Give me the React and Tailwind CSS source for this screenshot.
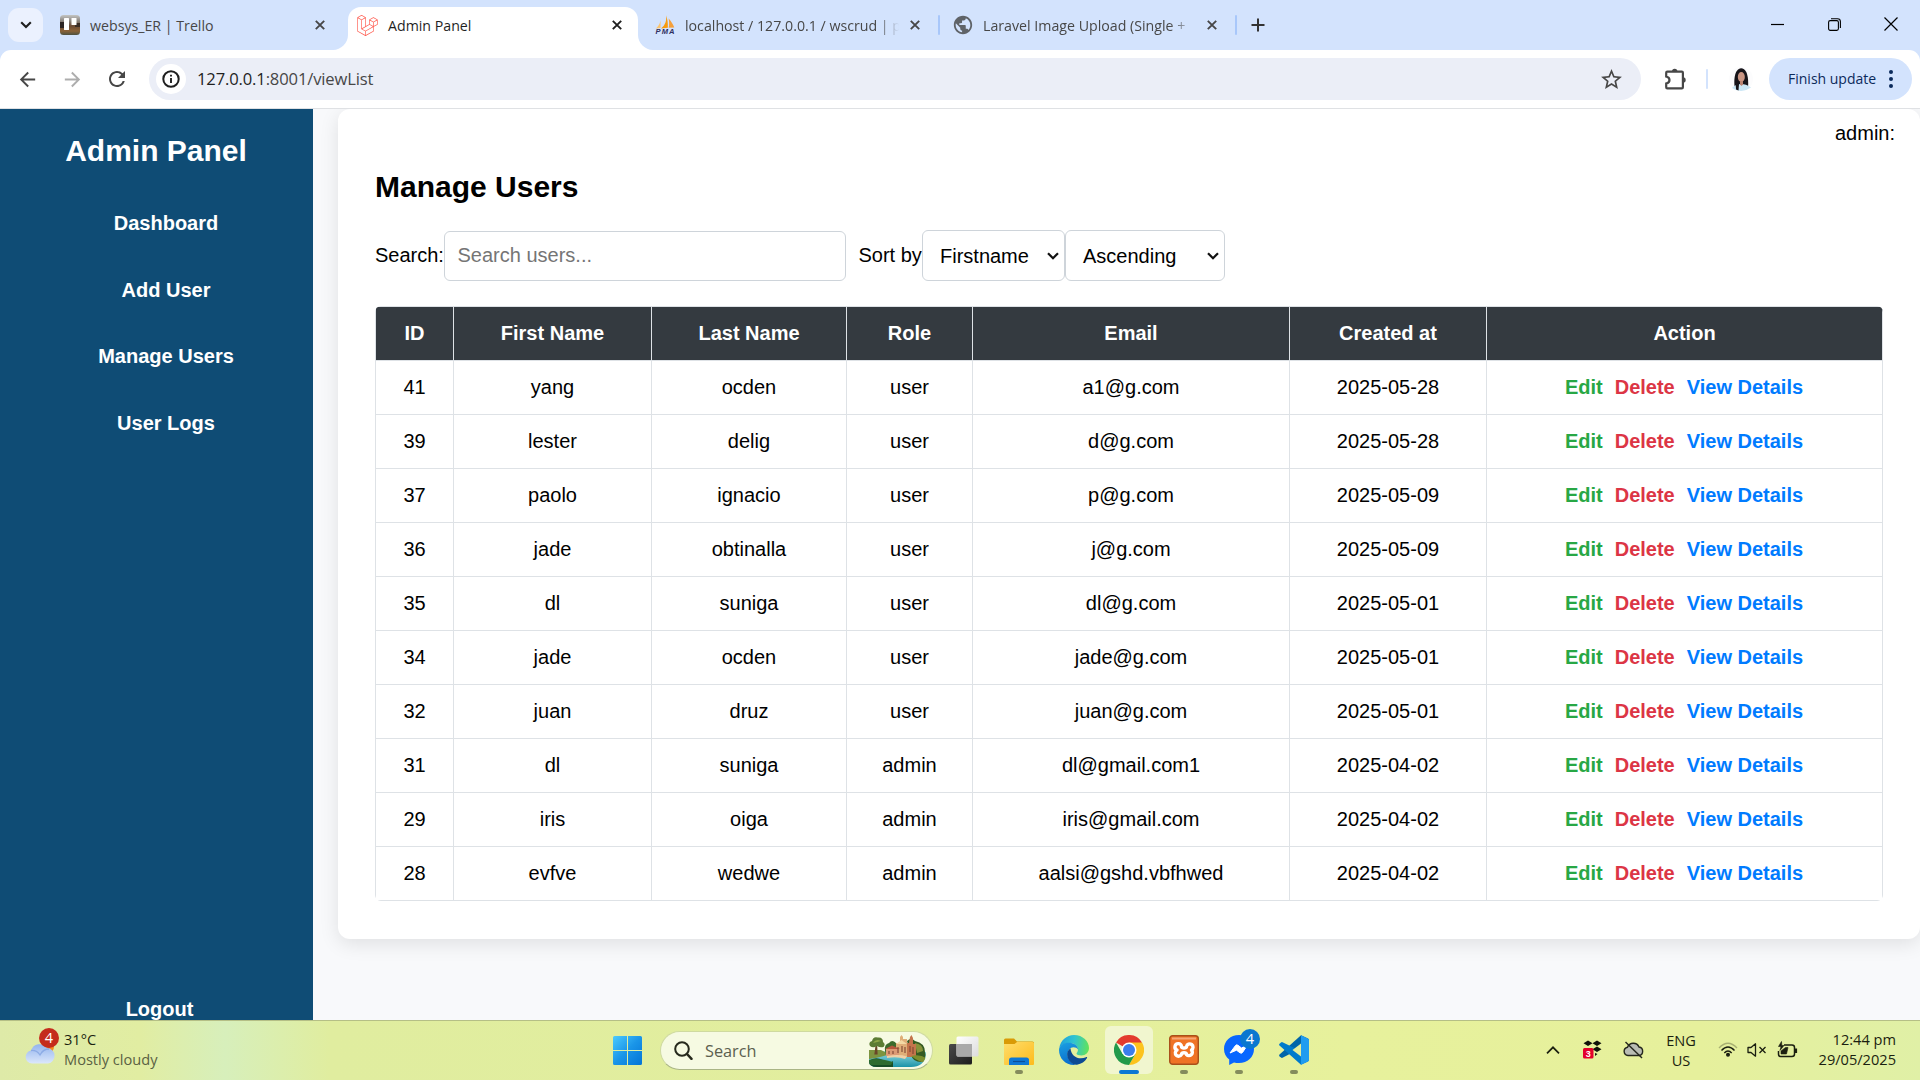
import React from "react";
import {
  MdArrowBack,
  MdArrowForward,
  MdRefresh,
  MdStarBorder,
  MdPublic,
} from "react-icons/md";
import { SiLaravel } from "react-icons/si";

const users = [
  [41, "yang", "ocden", "user", "a1@g.com", "2025-05-28"],
  [39, "lester", "delig", "user", "d@g.com", "2025-05-28"],
  [37, "paolo", "ignacio", "user", "p@g.com", "2025-05-09"],
  [36, "jade", "obtinalla", "user", "j@g.com", "2025-05-09"],
  [35, "dl", "suniga", "user", "dl@g.com", "2025-05-01"],
  [34, "jade", "ocden", "user", "jade@g.com", "2025-05-01"],
  [32, "juan", "druz", "user", "juan@g.com", "2025-05-01"],
  [31, "dl", "suniga", "admin", "dl@gmail.com1", "2025-04-02"],
  [29, "iris", "oiga", "admin", "iris@gmail.com", "2025-04-02"],
  [28, "evfve", "wedwe", "admin", "aalsi@gshd.vbfhwed", "2025-04-02"],
];

const columns = ["ID", "First Name", "Last Name", "Role", "Email", "Created at", "Action"];

function CloseX({ className = "text-[#474747]" }) {
  return (
    <svg className={"shrink-0 " + className} width="10" height="10" viewBox="0 0 10 10" fill="none" stroke="currentColor" strokeWidth="1.9">
      <path d="M0.8 0.8 9.2 9.2M9.2 0.8 0.8 9.2" />
    </svg>
  );
}

function BoardIcon() {
  return (
    <svg width="20" height="20" viewBox="0 0 20 20">
      <defs>
        <linearGradient id="board" x1="0" y1="0" x2="0" y2="1">
          <stop offset="0" stopColor="#c4c5c3" />
          <stop offset="0.3" stopColor="#8b8580" />
          <stop offset="0.55" stopColor="#6b4a33" />
          <stop offset="0.8" stopColor="#8a6238" />
          <stop offset="1" stopColor="#4c5040" />
        </linearGradient>
      </defs>
      <rect width="20" height="20" rx="3.5" fill="url(#board)" />
      <rect x="0" y="7" width="5" height="6" fill="#2b2422" />
      <rect x="15" y="8" width="5" height="4" fill="#3a2d26" />
      <rect x="4" y="3" width="5" height="12" rx="0.6" fill="#fff" />
      <rect x="11.5" y="3" width="5" height="7" rx="0.6" fill="#fff" />
    </svg>
  );
}

function PmaIcon() {
  return (
    <svg width="20" height="20" viewBox="0 0 20 20" className="overflow-visible">
      <path d="M5.500 2.5C6 7 4 11 0.8 13.5L5.500 13Z" fill="#fbc46f" />
      <path d="M11 0.2C11.8 5 10.5 10 6 13.4L12.8 12.8C13.100 8 12.5 4 11 0.2Z" fill="#f89c0e" />
      <path d="M13.600 3.5C14.300 7 14.300 10 13.700 12.800L19.300 12.6C18 9 16 6 13.600 3.5Z" fill="#f5a03c" />
      <text x="10" y="19.200" textAnchor="middle" fontSize="7.600" fontWeight="700" fontStyle="italic" fontFamily="Liberation Sans, sans-serif" fill="#2f2f5f" textLength="19">PMA</text>
    </svg>
  );
}

function Divider() {
  return <div className="h-5 w-[2px] rounded bg-[#a8c7fa]" />;
}

function Tab({ icon, title, className, fade }) {
  return (
    <div className={"flex h-[43px] shrink-0 items-center pb-[7px] " + className}>
      <div className="flex w-5 shrink-0 justify-center">{icon}</div>
      <div className={"ml-[10px] min-w-0 flex-1 pt-px whitespace-nowrap " + (fade || "")}>{title}</div>
      <CloseX />
    </div>
  );
}

function TabStrip() {
  return (
    <div className="flex h-[50px] shrink-0 bg-[#d3e3fd] pt-[7px] pl-2 text-[14.200px] text-[#474747]">
      <button className="mt-px flex h-[34px] w-[35px] items-center justify-center rounded-[11px] bg-[#ebf1fe]">
        <svg width="12" height="8" viewBox="0 0 12 8" fill="none" stroke="#1f1f1f" strokeWidth="2.1">
          <path d="M1.2 1.2 6 6 10.8 1.2" />
        </svg>
      </button>
      <Tab className="w-[282px] pl-[17px]" icon={<BoardIcon />} title="websys_ER | Trello" />
      <svg className="ml-2 self-end" width="15" height="15" viewBox="0 0 15 15">
        <path d="M15 0V15H0C8 15 15 8 15 0Z" fill="#fff" />
      </svg>
      <div className="flex h-[43px] w-[290px] shrink-0 items-center rounded-t-[13px] bg-white pb-[7px] pl-[9px] text-[#1f1f1f]">
        <SiLaravel size={21} color="#ff5a4e" />
        <div className="ml-[10px] flex-1 pt-px">Admin Panel</div>
        <CloseX className="mr-[16px] text-[#1f1f1f]" />
      </div>
      <svg className="self-end" width="15" height="15" viewBox="0 0 15 15">
        <path d="M0 0V15H15C7 15 0 8 0 0Z" fill="#fff" />
      </svg>
      <Tab
        className="w-[267px] pl-[2px]"
        icon={<PmaIcon />}
        title="localhost / 127.0.0.1 / wscrud | p"
        fade="mr-[9px] [mask-image:linear-gradient(to_right,black_192px,transparent_214px)]"
      />
      <div className="ml-[18px] flex h-9 items-center"><Divider /></div>
      <Tab
        className="ml-[13px] w-[264px]"
        icon={<MdPublic size={22} color="#5f6368" className="shrink-0" />}
        title="Laravel Image Upload (Single +"
        fade="mr-[12px] [mask-image:linear-gradient(to_right,black_186px,transparent_214px)]"
      />
      <div className="ml-[18px] flex h-9 items-center"><Divider /></div>
      <div className="ml-[14px] flex h-9 items-center">
        <svg width="14" height="14" viewBox="0 0 14 14" stroke="#333" strokeWidth="2"><path d="M7 0.5V13.5M0.5 7H13.5" /></svg>
      </div>
      <div className="mr-[22px] ml-auto flex h-[34px] items-center gap-[43px] text-black">
        <svg width="14" height="13" viewBox="0 0 14 13" stroke="currentColor"><path d="M0 6.5H13" strokeWidth="1.2" /></svg>
        <svg width="13" height="13" viewBox="0 0 13 13" fill="none" stroke="currentColor" strokeWidth="1.1">
          <rect x="0.6" y="2.6" width="9.8" height="9.8" rx="1.6" />
          <path d="M3 0.7H9.5Q12.4 0.7 12.4 3.6V10" />
        </svg>
        <svg width="14" height="14" viewBox="0 0 14 14" fill="none" stroke="currentColor" strokeWidth="1.2">
          <path d="M0.5 0.5 13.5 13.5M13.5 0.5 0.5 13.5" />
        </svg>
      </div>
    </div>
  );
}

function Avatar() {
  return (
    <svg width="24" height="24" viewBox="0 0 24 24">
      <circle cx="12" cy="12" r="12" fill="#fcfcfd" />
      <path d="M6 22C4.500 15 5 1.500 12.2 1.2C19.500 1.500 19.500 15 19 21Z" fill="#17151a" />
      <path d="M3 21C6 17.500 9 17 12 17S19 18 22 20.500Q17 24 12 24T3 21Z" fill="#c9e6f5" />
      <path d="M7 22.500 6.500 14 10 17 9.500 23.500Z" fill="#17151a" />
      <ellipse cx="12.300" cy="10" rx="3.500" ry="5" fill="#c99684" />
      <path d="M11 14H14V17.500L12.500 19 11 17.500Z" fill="#b98472" />
    </svg>
  );
}

function Toolbar() {
  return (
    <div className="h-[59px] shrink-0 bg-[#d3e3fd]">
      <div className="flex h-[59px] items-center rounded-t-[11px] border-b border-[#dfe1e4] bg-white pl-[16px]">
        <MdArrowBack size={23} color="#474747" />
        <MdArrowForward size={23} color="#adadad" className="ml-[22px]" />
        <MdRefresh size={24} color="#474747" className="ml-[21px]" />
        <div className="ml-[20px] flex h-[42px] w-[1492px] items-center rounded-full bg-[#ebeef7] pl-[7px]">
          <div className="flex size-[30px] items-center justify-center rounded-full bg-white">
            <svg width="18" height="18" viewBox="0 0 18 18" fill="none" stroke="#1f1f1f">
              <circle cx="9" cy="9" r="7.700" strokeWidth="2" />
              <path d="M9 8V13M9 4.800V6.500" strokeWidth="1.900" />
            </svg>
          </div>
          <div className="ml-[11px] flex-1 pt-px text-[16.600px] tracking-[-0.150px] text-[#474747]">
            <span className="text-[#1f1f1f]">127.0.0.1</span>:8001/viewList
          </div>
          <MdStarBorder size={25} color="#474747" className="mr-[17px]" />
        </div>
        <svg className="mb-[2px] ml-[23px]" width="23" height="25" viewBox="0 0 23 25" fill="none">
          <path d="M3.300 5.700H17.800Q18.900 5.700 18.900 6.800V21.200Q18.900 22.300 17.800 22.300H3.300Q2.200 22.300 2.200 21.200V17.500C6.600 16.500 6.600 11.500 2.200 10.500V6.800Q2.200 5.700 3.300 5.700Z" stroke="#474747" strokeWidth="2.200" />
          <path d="M8 5.500A2.700 2.700 0 0 1 13.400 5.500ZM19 11.200A2.700 2.700 0 0 1 19 16.600Z" fill="#474747" />
        </svg>
        <div className="ml-[19px] h-5 w-[2px] rounded bg-[#d3e3fd]" />
        <div className="ml-[21px]"><Avatar /></div>
        <div className="ml-[16px] flex h-[42px] w-[143px] items-center rounded-full bg-[#d3e3fd] pl-[19px] text-[14px] text-[#0b2a5b]">
          <span className="w-[96px] pb-px whitespace-nowrap">Finish update</span>
          <svg className="ml-[4px]" width="6" height="20" viewBox="0 0 6 20" fill="#0b2a5b">
            <circle cx="3" cy="3" r="2" /><circle cx="3" cy="10" r="2" /><circle cx="3" cy="17" r="2" />
          </svg>
        </div>
      </div>
    </div>
  );
}

function Sidebar() {
  return (
    <aside className="flex w-[313px] shrink-0 flex-col items-center bg-[#0f4c75] pt-[25px] font-bold text-white">
      <h2 className="mr-[1px] text-[30px] leading-[34px]">Admin Panel</h2>
      <nav className="mt-[44px] ml-[19px] flex flex-col items-center gap-[43.600px] text-[20px] leading-[23px]">
        <a>Dashboard</a>
        <a>Add User</a>
        <a>Manage Users</a>
        <a>User Logs</a>
      </nav>
      <a className="mt-auto -mb-px ml-[6px] text-[20px] leading-[23px]">Logout</a>
    </aside>
  );
}

function SelectBox({ label, className }) {
  return (
    <div className={"flex h-[51px] items-center justify-between rounded-[6px] border border-[#ced4da] pt-[2px] pl-[17px] " + className}>
      <span>{label}</span>
      <svg className="mr-[5px] mb-[2px]" width="12" height="8" viewBox="0 0 12 8" fill="none" stroke="#111" strokeWidth="2.200">
        <path d="M1 1.200 6 6.200 11 1.200" />
      </svg>
    </div>
  );
}

function UsersTable() {
  return (
    <div className="mt-[25px] w-[1508px] overflow-hidden rounded-[6px]">
      <table className="w-[1508px] table-fixed border-separate border-spacing-0 border-t border-l border-[#dee2e6] text-center">
        <colgroup>
          <col className="w-[78px]" />
          <col className="w-[198px]" />
          <col className="w-[195px]" />
          <col className="w-[126px]" />
          <col className="w-[317px]" />
          <col className="w-[197px]" />
          <col className="w-[396px]" />
        </colgroup>
        <thead>
          <tr className="bg-[#343a40] text-white">
            {columns.map((c) => (
              <th key={c} className="h-[54px] border-r border-b border-[#dee2e6] p-0 font-bold">{c}</th>
            ))}
          </tr>
        </thead>
        <tbody>
          {users.map((u) => (
            <tr key={u[0]}>
              {u.map((v, i) => (
                <td key={i} className="h-[54px] border-r border-b border-[#dee2e6] p-0">{v}</td>
              ))}
              <td className="h-[54px] border-r border-b border-[#dee2e6] p-0">
                <div className="flex justify-center gap-[12px] pr-px font-bold">
                  <a className="text-[#28a745]">Edit</a>
                  <a className="text-[#dc3545]">Delete</a>
                  <a className="text-[#007bff]">View Details</a>
                </div>
              </td>
            </tr>
          ))}
        </tbody>
      </table>
    </div>
  );
}

function Page() {
  return (
    <div className="flex h-[911px] shrink-0 overflow-hidden bg-[#f8f9fb] font-['Liberation_Sans',Arial,sans-serif] text-[20px] leading-[23px] text-black">
      <Sidebar />
      <main className="flex-1 pl-[25px]">
        <section className="h-[830px] rounded-[12px] bg-white pt-[13px] pl-[37px] shadow-[0_5px_19px_rgba(0,0,0,0.1)]">
          <div className="pr-[25px] text-right">admin:</div>
          <h2 className="mt-[25px] text-[30px] leading-[34px] font-bold">Manage Users</h2>
          <div className="mt-[26px] flex h-[51px] items-center">
            <label className="w-[69px]">Search:</label>
            <div className="mt-px flex h-[50px] w-[402px] items-center rounded-[6px] border border-[#ced4da] pb-[2px] pl-[12.500px] text-[#757575]">
              Search users...
            </div>
            <label className="ml-[12.500px] w-[63.500px] whitespace-nowrap">Sort by</label>
            <SelectBox label="Firstname" className="w-[143px]" />
            <SelectBox label="Ascending" className="w-[160px]" />
          </div>
          <UsersTable />
        </section>
      </main>
    </div>
  );
}

function Weather() {
  return (
    <svg width="34" height="36" viewBox="0 0 34 36" className="overflow-visible">
      <defs>
        <linearGradient id="cloud" x1="0" y1="0" x2="0" y2="1">
          <stop offset="0" stopColor="#93b4ee" />
          <stop offset="1" stopColor="#dbe7fb" />
        </linearGradient>
      </defs>
      <circle cx="23" cy="19" r="6" fill="#f58a1f" />
      <path d="M7 35.500A6.500 6.500 0 0 1 6 22.600A9 9 0 0 1 22 20A7.800 7.800 0 0 1 23 35.500Z" fill="url(#cloud)" />
      <path d="M6 22.500Q12 22 15 27Q18 21 24 21" fill="none" stroke="#7d9fe0" strokeWidth="1.300" opacity="0.7" />
      <circle cx="24" cy="10" r="10" fill="#c42b1c" />
      <text x="24" y="15" textAnchor="middle" fontSize="14.500" fontFamily="Open Sans, sans-serif" fill="#fff">4</text>
    </svg>
  );
}

function WindowsLogo() {
  return (
    <svg width="29" height="29" viewBox="0 0 29 29">
      <defs>
        <linearGradient id="win" x1="0" y1="0" x2="1" y2="1">
          <stop offset="0" stopColor="#4ccbfd" />
          <stop offset="0.500" stopColor="#1a95e8" />
          <stop offset="1" stopColor="#0374d6" />
        </linearGradient>
      </defs>
      <path d="M1.500 0H14V14H0V1.500Q0 0 1.500 0ZM15 0H27.500Q29 0 29 1.500V14H15ZM0 15H14V29H1.500Q0 29 0 27.500ZM15 15H29V27.500Q29 29 27.500 29H15Z" fill="url(#win)" />
    </svg>
  );
}

function Scenery() {
  return (
    <svg width="57" height="32" viewBox="0 0 57 32">
      <defs>
        <clipPath id="pill"><path d="M0 0H57V20Q55 32 42 32H8Q0 32 0 26Z" /></clipPath>
        <linearGradient id="water" x1="0" y1="0" x2="0" y2="1">
          <stop offset="0" stopColor="#9be0e6" />
          <stop offset="1" stopColor="#1c93a8" />
        </linearGradient>
      </defs>
      <g clipPath="url(#pill)">
        <path d="M0 18Q20 14 57 17V32H0Z" fill="url(#water)" />
        <path d="M0 15 12 15 20 19Q14 22 0 24Z" fill="#7d9440" />
        <path d="M0 26Q6 21 14 25T24 26V32H0Z" fill="#174c26" />
        <path d="M0 25Q8 22 24 27L22 30H0Z" fill="#2d6a2f" />
        <path d="M16 16Q15 9 20 8Q23 4 27 8V20H17Z" fill="#3c6b2c" />
        <path d="M38 6Q42 2 46 6Q56 8 56 17Q58 24 52 27Q44 27 42 20Z" fill="#355a22" />
        <path d="M46 8Q54 9 54 16L48 18Z" fill="#87923a" />
        <path d="M27 8H31V2L32.500 0 34 2V4H38V22H27Z" fill="#dfae78" />
        <path d="M17 14H30V21H17Z" fill="#dc9a74" />
        <path d="M16 14 23 10.500 31 14Z" fill="#b4573c" />
        <path d="M40 8 41 2 42.500 0 44 3V9H47V22H38V8Z" fill="#c4744c" />
        <path d="M27 9 32.500 5 38 9Z" fill="#f3d9a4" />
        <path d="M20 16V19M24 16V19M29 12V18M33 11V17M36 12V18M41 11V17M44 12V19" stroke="#7e4432" strokeWidth="1.100" />
        <path d="M18 21Q30 19 38 21.500L36 24Q28 21 18 23Z" fill="#efd0a6" />
        <path d="M42 21Q51 19 57 23V28Q50 27 42 21Z" fill="#7c8f2e" />
        <path d="M7.500 8 8 19H6Z" fill="#6a4528" stroke="#6a4528" strokeWidth="1.200" />
        <path d="M1 11Q-1 7 3 6Q4 1 9 2.500Q14 2 14 7Q17 9 14.500 12Q11 13 8 11Q4 13.500 1 11Z" fill="#5c7c34" />
        <path d="M4 8Q7 3 12 6Q9 7 4 8Z" fill="#8da647" />
      </g>
    </svg>
  );
}

function TaskView() {
  return (
    <svg width="30" height="29" viewBox="0 0 30 29">
      <defs>
        <linearGradient id="tv" x1="0" y1="0" x2="1" y2="1">
          <stop offset="0" stopColor="#4a4a4a" /><stop offset="1" stopColor="#1d1d1d" />
        </linearGradient>
        <linearGradient id="tw" x1="0" y1="0" x2="1" y2="1">
          <stop offset="0" stopColor="#fff" /><stop offset="1" stopColor="#dcdcdc" />
        </linearGradient>
      </defs>
      <rect x="0" y="8" width="23" height="20.500" rx="1.500" fill="url(#tv)" />
      <rect x="7.500" y="0.500" width="22" height="20" rx="1.500" fill="url(#tw)" />
      <path d="M7.500 8H23V20.500H9Q7.500 20.500 7.500 19Z" fill="#a9a9a9" />
    </svg>
  );
}

function Folder() {
  return (
    <svg width="30" height="27" viewBox="0 0 30 27">
      <defs>
        <linearGradient id="fold" x1="0" y1="0" x2="1" y2="1">
          <stop offset="0" stopColor="#ffdd6b" /><stop offset="1" stopColor="#fdbb1c" />
        </linearGradient>
      </defs>
      <path d="M0 2Q0 0.500 1.500 0.500H10L13 3.500H28.500Q30 3.500 30 5V12H0Z" fill="#d99a06" />
      <path d="M0 6H10.500L13 4H28.500Q30 4 30 5.500V26Q30 27 29 27H1Q0 27 0 26Z" fill="url(#fold)" />
      <path d="M5 27V22Q5 19.500 7.500 19.500H22.500Q25 19.500 25 22V27Z" fill="#0f78d4" />
      <path d="M9 23.500H21" stroke="#0a4f9a" strokeWidth="1.200" />
    </svg>
  );
}

function Edge() {
  return (
    <svg width="30" height="30" viewBox="0 0 30 30">
      <defs>
        <linearGradient id="eg1" x1="0" y1="0.300" x2="1" y2="0.400">
          <stop offset="0" stopColor="#1e9fe0" /><stop offset="0.500" stopColor="#30c5cf" /><stop offset="1" stopColor="#62e25c" />
        </linearGradient>
        <linearGradient id="eg2" x1="0" y1="0" x2="0.300" y2="1">
          <stop offset="0" stopColor="#1ba0e2" /><stop offset="1" stopColor="#0b6fce" />
        </linearGradient>
      </defs>
      <path d="M0.300 13C1.500 5.500 7.500 0 15 0C24 0 30 6.500 30 13C30 17.500 26.500 20.500 22.500 20.500C19.500 20.500 17.500 19.500 17.500 18.500C17.500 17.800 19 17 19 14.500C19 11 15.500 8 11 8C5.500 8 1.500 10.500 0.300 13Z" fill="url(#eg1)" />
      <path d="M0 15C0 10.500 4.500 7.800 9.500 7.800C14.500 7.800 19 10.500 19 14.500C18 13 16.500 12.200 14.500 12.200C11 12.200 8.500 15.500 8.500 19.500C8.500 24.500 12 28.500 17 29.800C7.500 31 0 24 0 15Z" fill="url(#eg2)" />
      <path d="M11.500 13.200C9 15 8 17 8.200 20C8.600 25.500 13 30 18 29.700C22.500 29 26 26.500 28 23C28.500 22.200 27.800 21.800 27 22.200C20 25.500 12 21.500 11.500 13.200Z" fill="#0c4a94" />
    </svg>
  );
}

function Chrome() {
  return (
    <svg width="30" height="30" viewBox="0 0 30 30">
      <path d="M15 15 2 7.500A15 15 0 0 1 28 7.500Z" fill="#e33b2e" />
      <path d="M15 15V7.500H28A15 15 0 0 1 15 30L21.500 18.700Z" fill="#fcc31e" />
      <path d="M15 15 8.500 18.700 2 7.500A15 15 0 0 0 15 30L21.500 18.700Z" fill="#229a4a" />
      <circle cx="15" cy="15" r="7.500" fill="#fff" />
      <circle cx="15" cy="15" r="6" fill="#3b7ded" />
    </svg>
  );
}

function Xampp() {
  return (
    <svg width="30" height="30" viewBox="0 0 30 30">
      <rect x="0.700" y="0.700" width="28.600" height="28.600" rx="3" fill="#ef7325" stroke="#a9501a" strokeWidth="1.400" />
      <path d="M3 2.500H27V4.500H3Z" fill="#f9b48a" opacity="0.800" />
      <path d="M12.500 11.500A3.300 3.300 0 1 0 8 15A3.300 3.300 0 1 0 12.500 19.500Q12.300 17.800 15 17.800T17.500 19.500A3.300 3.300 0 1 0 22.500 15A3.300 3.300 0 1 0 17.500 11.500Q17.700 13 15 13T12.500 11.500Z" fill="none" stroke="#fff" strokeWidth="3.400" strokeLinejoin="round" />
    </svg>
  );
}

function Messenger() {
  return (
    <svg width="36" height="36" viewBox="0 0 36 36">
      <path d="M15 6C6.500 6 0 12 0 20C0 24.500 2 28 5.200 30.600V36L10 33.400C11.600 33.800 13.200 34.100 15 34.100C23.500 34.100 30 28 30 20S23.500 6 15 6Z" fill="#0866ff" />
      <path d="M6 24 11.500 16.500Q12.500 15.300 14 16.300L17.500 19 23.500 16 18.500 23.500Q17.500 24.800 16 23.800L12.500 21.200Z" fill="#fff" stroke="#fff" strokeLinejoin="round" />
      <circle cx="26" cy="10" r="10" fill="#0a77d0" />
      <text x="26" y="15" textAnchor="middle" fontSize="14.500" fontFamily="Open Sans, sans-serif" fill="#fff">4</text>
    </svg>
  );
}

function VsCode() {
  return (
    <svg width="30" height="30" viewBox="0 0 30 30">
      <path d="M22 0.300 29 3.500Q30 4 30 5.200V9L3.500 22.800Q2.700 23.200 2 22.600L0.500 21.200Q-0.300 20.300 0.500 19.500Z" fill="#0065a9" />
      <path d="M22 29.700 29 26.500Q30 26 30 24.800V20L3.500 7.200Q2.700 6.800 2 7.400L0.500 8.800Q-0.300 9.700 0.500 10.500Z" fill="#007acc" />
      <path d="M22 8.500V21.500L13.500 15Z" fill="#e4ee9d" />
      <path d="M22 0.300 28.800 3.500Q30 4.100 30 5.300V24.700Q30 25.900 28.800 26.500L22 29.700Z" fill="#1f9cf0" />
    </svg>
  );
}

function AppSlot({ children, dot = true, active, className = "" }) {
  return (
    <div className={"flex h-12 w-12 flex-col items-center justify-end rounded-[6px] " + (active ? "bg-[#f1f6cf] " : "") + className}>
      <div className="flex flex-1 items-end pb-[5px]">{children}</div>
      <div className={"h-1 rounded-full " + (active ? "w-5 bg-[#0a78d4]" : dot ? "w-2 bg-[#858c5c]" : "w-2")} />
    </div>
  );
}

function Taskbar() {
  return (
    <div className="flex h-[60px] shrink-0 items-start border-t border-[#b5bf86] bg-[linear-gradient(90deg,#deeaa8_0px,#e1eda2_140px,#d7efbb_225px,#e0ed9f_330px,#e2ee9e_900px,#e7f19c_1350px,#e6f09c_1700px,#e0f0a6_1920px)] text-[14.600px] text-[#1b1f10]">
      <div className="flex w-[613px] pt-[7px] pl-[25px]">
        <Weather />
        <div className="ml-[5px] pt-px leading-5">
          <div>31°C</div>
          <div className="text-[#5a6143]">Mostly cloudy</div>
        </div>
      </div>
      <div className="pt-[15px]"><WindowsLogo /></div>
      <div className="mt-[10px] ml-[18px] flex h-[39px] w-[273px] items-center rounded-full border border-b-[#aab585] border-[#cfdaa0] bg-[#f6fae2] pl-[13px]">
        <svg width="19" height="19" viewBox="0 0 19 19" fill="none" stroke="#26291c" strokeWidth="2">
          <circle cx="8" cy="8" r="6.800" /><path d="M13 13 17.500 17.800" strokeWidth="2.500" strokeLinecap="round" />
        </svg>
        <span className="ml-[12px] pt-px text-[16.300px] text-[#5c604f]">Search</span>
        <div className="mr-[6px] ml-auto"><Scenery /></div>
      </div>
      <div className="ml-4 pt-[15px]"><TaskView /></div>
      <div className="mt-[5px] ml-4 flex gap-[7px]">
        <AppSlot><Folder /></AppSlot>
        <AppSlot dot={false}><Edge /></AppSlot>
        <AppSlot active><Chrome /></AppSlot>
        <AppSlot><Xampp /></AppSlot>
        <AppSlot><div className="-mr-[6px]"><Messenger /></div></AppSlot>
        <AppSlot><VsCode /></AppSlot>
      </div>
      <div className="mr-[24px] ml-auto flex h-[57px] items-center">
        <svg width="14" height="8" viewBox="0 0 14 8" fill="none" stroke="#1b1f10" strokeWidth="1.700"><path d="M1 7.300 7 1.300 13 7.300" /></svg>
        <svg className="ml-[23px]" width="19" height="19" viewBox="0 0 19 19">
          <path d="M5 0.500 9.500 3.200 5 6 0.500 3.200ZM14 0.500 18.500 3.200 14 6 9.500 3.200ZM14 6.500 18.500 9.200 14 12 9.500 9.200ZM12 13 14.500 14 12 16Z" fill="#10120a" />
          <rect x="0" y="8" width="10.500" height="10.500" rx="1.500" fill="#e3002b" />
          <text x="5.200" y="16.500" textAnchor="middle" fontSize="9" fontWeight="700" fontFamily="Liberation Sans, sans-serif" fill="#fff">3</text>
        </svg>
        <svg className="ml-[21px]" width="21" height="18" viewBox="0 0 21 18">
          <path d="M5 14.500A4.200 4.200 0 0 1 4.500 6.200A6.200 6.200 0 0 1 16 6A4.300 4.300 0 0 1 16 14.500Z" fill="#b9bcb4" stroke="#24261d" strokeWidth="1.400" />
          <path d="M2.500 1 19 17" stroke="#24261d" strokeWidth="1.400" />
        </svg>
        <div className="ml-[19px] w-[36px] text-center leading-5">ENG<br />US</div>
        <svg className="ml-[19px]" width="20" height="15" viewBox="0 0 20 15" fill="none" stroke="#1b1f10" strokeWidth="1.400">
          <path d="M1 6Q10-3.500 19 6" opacity="0.300" />
          <path d="M3.500 8.500Q10 1.500 16.500 8.500M6.300 11Q10 7 13.700 11" />
          <circle cx="10" cy="12.800" r="1.300" fill="#1b1f10" />
        </svg>
        <svg className="ml-[9px]" width="20" height="14" viewBox="0 0 20 14" fill="none" stroke="#1b1f10" strokeWidth="1.300">
          <path d="M1 4.500H4L8.500 0.800V13.200L4 9.500H1Z" strokeLinejoin="round" /><path d="M12.500 4 18.500 10M18.500 4 12.500 10" />
        </svg>
        <svg className="ml-[10px]" width="21" height="17" viewBox="0 0 21 17" fill="none" stroke="#1b1f10" strokeWidth="1.500">
          <path d="M7 4H15Q17.500 4 17.500 6.500V13Q17.500 15.500 15 15.500H3.500Q1.500 15.500 1.500 13V10" />
          <path d="M19 7.500V12" strokeWidth="2.200" />
          <path d="M4 13V10L8.500 6.500H11L9.500 13ZM4.500 0.500 1.500 5.500H4L3 9.500 7 4.500H4.800Z" fill="#1b1f10" strokeWidth="0.600" />
        </svg>
        <div className="w-[98px] pb-px text-right leading-5">12:44 pm<br />29/05/2025</div>
      </div>
    </div>
  );
}

export default function App() {
  return (
    <div className="flex h-[1080px] w-[1920px] flex-col overflow-hidden font-['Open_Sans','Noto_Sans',sans-serif]">
      <TabStrip />
      <Toolbar />
      <Page />
      <Taskbar />
    </div>
  );
}
